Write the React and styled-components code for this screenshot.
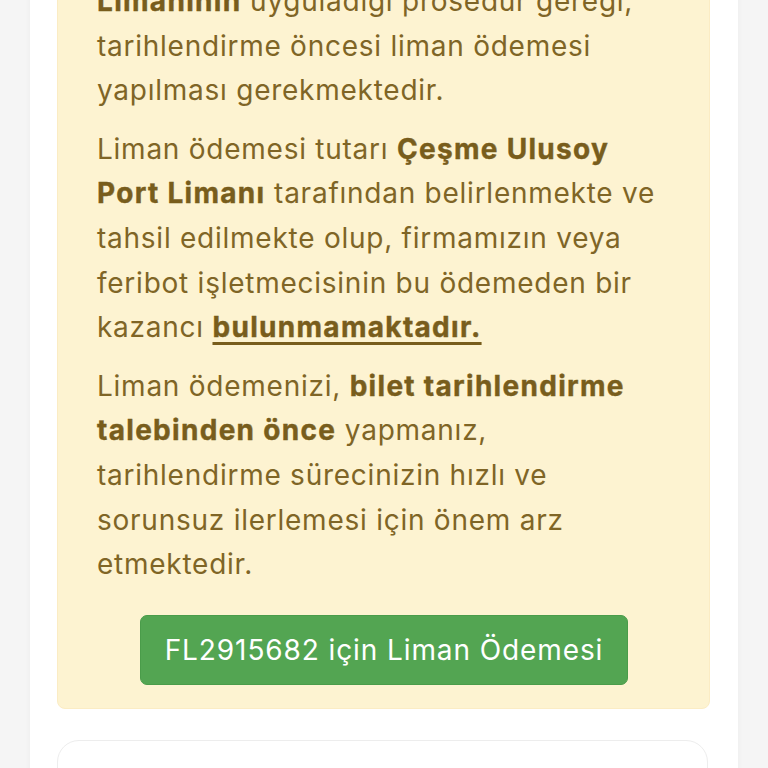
import React from "react";
import styled, { createGlobalStyle } from "styled-components";

const GlobalStyle = createGlobalStyle`
  html, body {
    margin: 0;
    padding: 0;
    background: #f5f5f5;
    font-family: Inter, "Noto Sans", "Liberation Sans", sans-serif;
    overflow: hidden;
  }
  * { box-sizing: border-box; }
`;

const Page = styled.div`
  display: flex;
  justify-content: center;
  margin-top: -43px;
`;

const Panel = styled.main`
  width: 708px;
  background: #ffffff;
  padding: 0 28px 40px 27px;
  box-shadow: 0 0 6px rgba(0, 0, 0, 0.04);
  min-height: 900px;
`;

const Alert = styled.section`
  background: #fdf3d1;
  border: 1px solid #fbecc4;
  border-radius: 8px;
  padding: 21px 38px 23px 39px;
  color: #7f6526;
`;

const Para = styled.p`
  margin: 0 0 14px;
  font-size: 28px;
  line-height: 44.6px;
  font-weight: 400;
  letter-spacing: 0.75px;
`;

const Strong = styled.strong`
  font-weight: 700;
  color: #785d1c;
  letter-spacing: 1.3px;
  -webkit-text-stroke: 0.4px #785d1c;
  text-decoration: ${(p) => (p.$underline ? "underline" : "none")};
  text-underline-offset: 5px;
  text-decoration-thickness: 2.5px;
`;

const Actions = styled.div`
  display: flex;
  justify-content: center;
  margin-top: 28px;
`;

const PayButton = styled.button`
  font-family: Inter, "Noto Sans", "Liberation Sans", sans-serif;
  font-size: 28px;
  font-weight: 400;
  letter-spacing: 0.9px;
  line-height: 40px;
  color: #ffffff;
  background: #53a552;
  border: 1px solid #4a9c4a;
  border-radius: 7px;
  height: 70px;
  padding: 0 24px;
  cursor: pointer;
`;

const NextCard = styled.section`
  margin-top: 31px;
  margin-right: 2px;
  height: 300px;
  background: #ffffff;
  border: 1px solid #ededed;
  border-radius: 22px;
`;

export default function App() {
  return (
    <>
      <GlobalStyle />
      <Page>
        <Panel>
          <Alert>
            <Para>
              <Strong>Limanının</Strong> uyguladığı prosedür gereği,
              tarihlendirme öncesi liman ödemesi yapılması gerekmektedir.
            </Para>
            <Para>
              Liman ödemesi tutarı <Strong>Çeşme Ulusoy Port Limanı</Strong>{" "}
              tarafından belirlenmekte ve tahsil edilmekte olup, firmamızın
              veya feribot işletmecisinin bu ödemeden bir kazancı{" "}
              <Strong $underline>bulunmamaktadır.</Strong>
            </Para>
            <Para>
              Liman ödemenizi, <Strong>bilet tarihlendirme talebinden önce</Strong>{" "}
              yapmanız, tarihlendirme sürecinizin hızlı ve sorunsuz ilerlemesi
              için önem arz etmektedir.
            </Para>
            <Actions>
              <PayButton type="button">FL2915682 için Liman Ödemesi</PayButton>
            </Actions>
          </Alert>
          <NextCard />
        </Panel>
      </Page>
    </>
  );
}
